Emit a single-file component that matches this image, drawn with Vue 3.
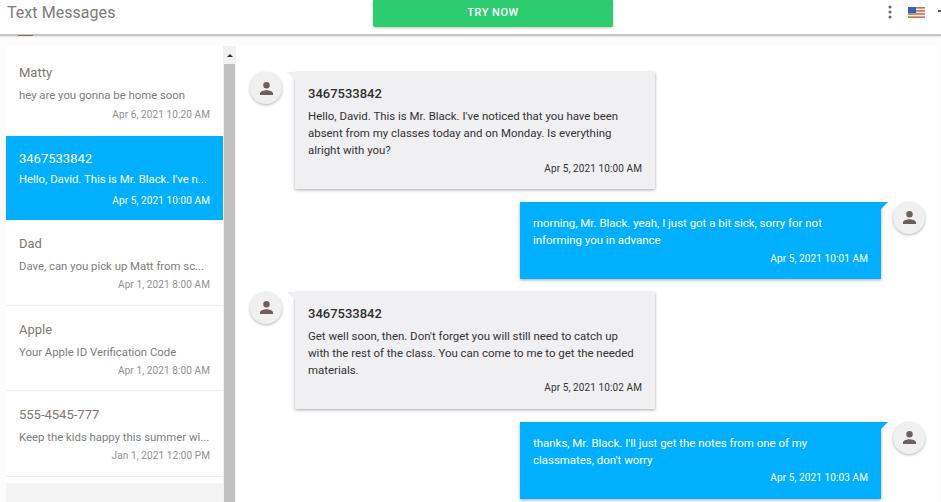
<template>
  <div class="page">
    <header class="topbar">
      <div class="title">Text Messages</div>
      <button class="try-btn">TRY NOW</button>
      <div class="top-right">
        <svg class="dots" width="4" height="14" viewBox="0 0 4 14">
          <circle cx="2" cy="2" r="1.5" />
          <circle cx="2" cy="7" r="1.5" />
          <circle cx="2" cy="12" r="1.5" />
        </svg>
        <svg class="flag" width="17" height="11" viewBox="0 0 17 11">
          <rect width="17" height="11" fill="#f2ece4" />
          <rect width="17" height="1.6" fill="#c0764f" />
          <rect y="3.1" width="17" height="1.6" fill="#c0764f" />
          <rect y="6.2" width="17" height="1.6" fill="#c0764f" />
          <rect y="9.4" width="17" height="1.6" fill="#c0764f" />
          <rect width="8" height="6" fill="#3563b5" />
        </svg>
        <span class="caret"></span>
      </div>
    </header>

    <div class="content">
      <span class="peek"></span>
      <aside class="sidebar">
        <div class="thread-list">
          <div
            v-for="t in threads"
            :key="t.name"
            class="thread"
            :class="{ active: t.active }"
          >
            <div class="thread-name">{{ t.name }}</div>
            <div class="thread-text">{{ t.text }}</div>
            <div class="thread-date">{{ t.date }}</div>
          </div>
          <div class="thread-rest"></div>
        </div>
        <div class="scrollbar">
          <div class="scroll-up"><span></span></div>
          <div class="scroll-thumb"></div>
        </div>
      </aside>

      <main class="chat">
        <div
          v-for="(m, i) in messages"
          :key="i"
          class="msg-row"
          :class="m.mine ? 'mine' : 'theirs'"
        >
          <div class="avatar">
            <svg width="17" height="17" viewBox="0 0 24 24">
              <path d="M12 12a4.600 4.600 0 1 0 0-9.200 4.600 4.600 0 0 0 0 9.200zm0 2.300c-3.100 0-9.200 1.500-9.200 4.600v2.300h18.400v-2.300c0-3.100-6.100-4.600-9.200-4.600z" />
            </svg>
          </div>
          <div class="bubble">
            <div v-if="!m.mine" class="bubble-name">3467533842</div>
            <div class="bubble-text">{{ m.text }}</div>
            <div class="bubble-date">{{ m.date }}</div>
          </div>
        </div>
      </main>
    </div>
  </div>
</template>

<script setup>
const threads = [
  { name: 'Matty', text: 'hey are you gonna be home soon', date: 'Apr 6, 2021 10:20 AM' },
  { name: '3467533842', text: "Hello, David. This is Mr. Black. I've n...", date: 'Apr 5, 2021 10:00 AM', active: true },
  { name: 'Dad', text: 'Dave, can you pick up Matt from sc...', date: 'Apr 1, 2021 8:00 AM' },
  { name: 'Apple', text: 'Your Apple ID Verification Code', date: 'Apr 1, 2021 8:00 AM' },
  { name: '555-4545-777', text: 'Keep the kids happy this summer wi...', date: 'Jan 1, 2021 12:00 PM' }
]

const messages = [
  { text: "Hello, David. This is Mr. Black. I've noticed that you have been absent from my classes today and on Monday. Is everything alright with you?", date: 'Apr 5, 2021 10:00 AM' },
  { mine: true, text: 'morning, Mr. Black. yeah, I just got a bit sick, sorry for not informing you in advance', date: 'Apr 5, 2021 10:01 AM' },
  { text: "Get well soon, then. Don't forget you will still need to catch up with the rest of the class. You can come to me to get the needed materials.", date: 'Apr 5, 2021 10:02 AM' },
  { mine: true, text: "thanks, Mr. Black. I'll just get the notes from one of my classmates, don't worry", date: 'Apr 5, 2021 10:03 AM' }
]
</script>

<style>
html,
body {
  margin: 0;
  height: 100%;
  overflow: hidden;
  background: #fcfcfc;
}
</style>

<style scoped>
.page {
  width: 941px;
  height: 502px;
  overflow: hidden;
  font-family: Roboto, "Liberation Sans", sans-serif;
  background: #fcfcfc;
}

.topbar {
  position: relative;
  z-index: 2;
  height: 34px;
  background: #fff;
  border-bottom: 2px solid #c4c4c4;
  box-shadow: 0 1px 2px rgba(0, 0, 0, 0.1);
  display: grid;
  grid-template-columns: 373px 240px 1fr;
  align-items: start;
}

.title {
  padding: 2px 0 0 7px;
  font-size: 16px;
  line-height: 21px;
  letter-spacing: 0.05px;
  color: #7b7b7b;
}

.try-btn {
  height: 27px;
  padding: 0 0 2px;
  border: none;
  border-radius: 0 0 2px 2px;
  background: #2ecc71;
  color: #fff;
  font-family: inherit;
  font-size: 11px;
  font-weight: 500;
  letter-spacing: 0.5px;
  box-shadow: 0 1px 3px rgba(0, 0, 0, 0.25);
}

.top-right {
  display: flex;
  justify-content: flex-end;
  align-items: center;
  height: 24px;
}

.dots {
  fill: #666;
  margin-right: 16px;
}

.flag {
  margin-top: 1px;
  margin-right: 13px;
}

.caret {
  width: 3px;
  height: 2px;
  margin-top: -2px;
  background: #555;
}

.content {
  position: relative;
  display: flex;
  padding: 10px 2px 0 6px;
  height: 456px;
}

/* bottom edge of something hidden behind the bar */
.peek {
  position: absolute;
  z-index: 3;
  top: -1px;
  left: 18px;
  width: 15px;
  height: 1px;
  background: #86685c;
}

.sidebar {
  display: flex;
  width: 230px;
  flex: none;
}

.thread-list {
  width: 217px;
  flex: none;
  background: #f3f3f3;
  overflow: hidden;
}

.thread {
  height: 85.5px;
  box-sizing: border-box;
  padding: 16px 13px 0;
  background: #fff;
  border-bottom: 1px solid #eeeeee;
  color: #7d7d7d;
}

.thread:first-child {
  height: 90px;
  padding-top: 19px;
  border-bottom: none;
}

.thread.active {
  height: 84px;
  padding-top: 15px;
  background: #00b0ff;
  color: #fff;
  border-bottom: none;
}

.thread-name {
  font-size: 13px;
  line-height: 16px;
  color: #7d7875;
}

.active .thread-name,
.active .thread-text,
.active .thread-date {
  color: #fff;
}

.thread-text {
  margin-top: 6px;
  font-size: 11.35px;
  line-height: 16px;
  white-space: nowrap;
}

.active .thread-text {
  margin-top: 4px;
}

.thread-date {
  margin-top: 5px;
  font-size: 10px;
  line-height: 12px;
  letter-spacing: 0.1px;
  text-align: right;
  color: #909090;
}

.thread:first-child .thread-date {
  margin-top: 6px;
}

.active .thread-date {
  margin-top: 8px;
}

.thread-rest {
  height: 100%;
  border-top: 6px solid #fff;
}

.scrollbar {
  width: 13px;
  background: #f1f1f1;
  display: flex;
  flex-direction: column;
}

.scroll-up {
  height: 18px;
  display: flex;
  align-items: center;
  justify-content: center;
}

.scroll-up span {
  border-left: 3px solid transparent;
  border-right: 3px solid transparent;
  border-bottom: 3px solid #333;
}

.scroll-thumb {
  flex: 1;
  width: 11px;
  margin-left: 1px;
  background: #c1c1c1;
}

.chat {
  flex: 1;
  background: #fff;
  padding: 26.2px 14px 0;
  min-width: 0;
}

.msg-row {
  display: flex;
  align-items: flex-start;
  gap: 13px;
  margin-bottom: 13px;
}

.msg-row.mine {
  gap: 12px;
  flex-direction: row-reverse;
}

.avatar {
  width: 32px;
  height: 32px;
  flex: none;
  border-radius: 50%;
  background: #f1f0f1;
  box-shadow: 0 1px 3px rgba(0, 0, 0, 0.3);
  display: flex;
  align-items: center;
  justify-content: center;
}

.avatar svg {
  fill: #6d5f5f;
}

.bubble {
  position: relative;
  box-sizing: border-box;
  width: 360px;
  padding: 13px 13px 13.4px;
  background: #f0eff1;
  color: #333;
  font-size: 11.45px;
  line-height: 16.8px;
  box-shadow: 0 1px 3px rgba(0, 0, 0, 0.35);
}

.bubble::before {
  content: "";
  position: absolute;
  top: 0;
  left: -8px;
  border-top: 8px solid #f0eff1;
  border-left: 8px solid transparent;
}

.mine .bubble {
  width: 361px;
  background: #00b0ff;
  color: #fff;
}

.mine .bubble::before {
  left: auto;
  right: -7px;
  border-top: 7px solid #00b0ff;
  border-left: none;
  border-right: 7px solid transparent;
}

.bubble-name {
  font-size: 13px;
  font-weight: 500;
  line-height: 18px;
  color: #2f2f2f;
  margin-bottom: 5px;
}

.bubble-date {
  margin-top: 3px;
  font-size: 10px;
  line-height: 14px;
  letter-spacing: 0.1px;
  text-align: right;
}
</style>
